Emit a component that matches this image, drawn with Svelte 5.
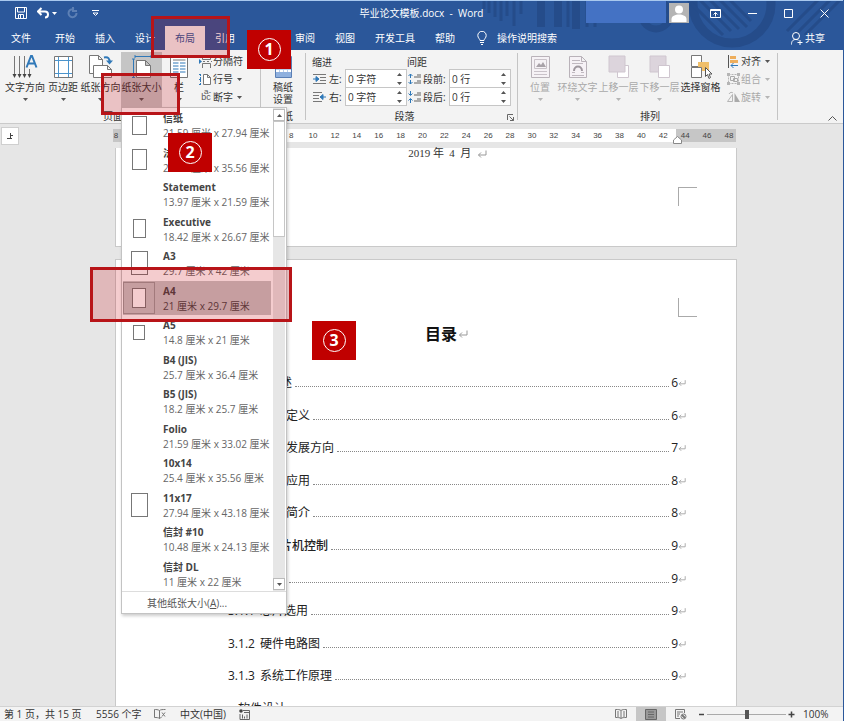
<script>
  const tabs = ['开始', '插入', '设计', '布局', '引用', '邮件', '审阅', '视图', '开发工具', '帮助'];
  const active = '布局';

  const pageTools = [
    { label: '文字方向', icon: 'textdir', w: 'w42' },
    { label: '页边距', icon: 'margins', w: 'w34' },
    { label: '纸张方向', icon: 'orient', w: 'w41' },
    { label: '纸张大小', icon: 'size', w: 'w41', on: true },
    { label: '栏', icon: 'columns', w: 'w34' }
  ];
  const pageSmall = [
    { label: '分隔符', icon: 'breaks' },
    { label: '行号', icon: 'lines' },
    { label: '断字', icon: 'hyphen' }
  ];
  const arrange = [
    { label: '位置', icon: 'position', w: 'w34', off: true },
    { label: '环绕文字', icon: 'wrap', w: 'w41', off: true },
    { label: '上移一层', icon: 'forward', w: 'w41', off: true },
    { label: '下移一层', icon: 'backward', w: 'w41', off: true },
    { label: '选择窗格', icon: 'pane', w: 'w41', flat: true }
  ];
  const arrangeSmall = [
    { label: '对齐', icon: 'align' },
    { label: '组合', icon: 'group', off: true },
    { label: '旋转', icon: 'rotate', off: true }
  ];
  const indent = [
    { id: 'left', label: '左:', icon: 'indl', value: '0 字符' },
    { id: 'right', label: '右:', icon: 'indr', value: '0 字符' }
  ];
  const spacing = [
    { id: 'before', label: '段前:', icon: 'spb', value: '0 行' },
    { id: 'after', label: '段后:', icon: 'spa', value: '0 行' }
  ];

  const sizes = [
    { name: '信纸', dim: '21.59 厘米 x 27.94 厘米', t: [15, 19] },
    { name: '法律', dim: '21.59 厘米 x 35.56 厘米', t: [15, 21] },
    { name: 'Statement', dim: '13.97 厘米 x 21.59 厘米' },
    { name: 'Executive', dim: '18.42 厘米 x 26.67 厘米', t: [13, 19] },
    { name: 'A3', dim: '29.7 厘米 x 42 厘米', t: [17, 24] },
    { name: 'A4', dim: '21 厘米 x 29.7 厘米', t: [14, 20], on: true },
    { name: 'A5', dim: '14.8 厘米 x 21 厘米', t: [12, 15] },
    { name: 'B4 (JIS)', dim: '25.7 厘米 x 36.4 厘米' },
    { name: 'B5 (JIS)', dim: '18.2 厘米 x 25.7 厘米' },
    { name: 'Folio', dim: '21.59 厘米 x 33.02 厘米' },
    { name: '10x14', dim: '25.4 厘米 x 35.56 厘米' },
    { name: '11x17', dim: '27.94 厘米 x 43.18 厘米', t: [17, 24] },
    { name: '信封 #10', dim: '10.48 厘米 x 24.13 厘米' },
    { name: '信封 DL', dim: '11 厘米 x 22 厘米' }
  ];

  const ticks = Array.from({ length: 29 }, (_, i) => Math.abs(i * 2 - 8) || '');

  const toc = [
    { l: 1, n: '第一章', t: '课题概述', p: 6 },
    { l: 2, n: '1.1', t: '单片机的定义', p: 6 },
    { l: 2, n: '1.2', t: '单片机的发展方向', p: 7 },
    { l: 2, n: '1.3', t: '单片机的应用', p: 8 },
    { l: 2, n: '1.4', t: '系统方案简介', p: 8 },
    { l: 1, n: '第二章', t: '基于单片机控制', p: 9, b: true },
    { l: 2, n: '3.1', t: '硬件设计', p: 9 },
    { l: 3, n: '3.1.1', t: '芯片选用', p: 9 },
    { l: 3, n: '3.1.2', t: '硬件电路图', p: 9 },
    { l: 3, n: '3.1.3', t: '系统工作原理', p: 9 },
    { l: 2, n: '', t: '软件设计', p: '' }
  ];
</script>

{#snippet ret()}
  <svg class="ret" width="10" height="8" viewBox="0 0 10 8"><path d="M9 .5V5H1.5M4 2.5 1.5 5 4 7.5" /></svg>
{/snippet}

{#snippet caret()}
  <svg class="caret" width="5" height="3" viewBox="0 0 5 3"><path d="M0 0h5L2.5 3z" /></svg>
{/snippet}

{#snippet icon(name)}
  {#if name === 'textdir'}
    <svg width="26" height="24" viewBox="0 0 26 24" fill="none">
      <path d="M2.5 1v19M7.5 1v19M12.5 1v19M17.5 14v6" stroke="#777" /><path d="M.5 19h4l-2 4zM5.500 19h4l-2 4zM10.500 19h4l-2 4zM15.500 19h4l-2 4z" fill="#444" />
      <path d="M14.500 12.500 19 1h1l4.500 11.500M16 8.500h7" stroke="#2f78b8" stroke-width="2" />
    </svg>
  {:else if name === 'margins'}
    <svg width="19" height="24" viewBox="0 0 19 24" fill="none">
      <path d="M.5 1.500h18v21H.5z" fill="#fff" stroke="#777" /><path d="M4.500 2v20M14.500 2v20M1 5.500h17M1 18.500h17" stroke="#4b94cc" />
    </svg>
  {:else if name === 'orient'}
    <svg width="24" height="24" viewBox="0 0 24 24" fill="none">
      <path d="M.5.5h9l4 4v14H.5zM9.500.5v4h4" fill="#fff" stroke="#777" /><path d="M4.500 10.500h14l4 4v8h-18zM18.500 10.500v4h4" fill="#fff" stroke="#777" />
      <path d="M15 2.500c4-1 6 1 5.500 5" stroke="#2f78b8" stroke-width="2" /><path d="M17 5.500h7L20.500 9.500z" fill="#2f78b8" />
    </svg>
  {:else if name === 'size'}
    <svg width="20" height="24" viewBox="0 0 20 24" fill="none">
      <path d="M3 1.500h16M3 0v3M19 0v3M1.500 4v19M0 4h3M0 22.500h3" stroke="#2f78b8" /><path d="M4.500 5.500h9l5 5v12h-14zM13.500 5.500v5h5" fill="#fff" stroke="#777" />
    </svg>
  {:else if name === 'columns'}
    <svg width="20" height="24" viewBox="0 0 20 24" fill="none">
      <path d="M1.500 1.500h17v21h-17z" fill="#fff" stroke="#777" /><path d="M4 8h5.500M4 11h5.500M4 14h5.500M4 17h5.500M11 8h5.500M11 11h5.500M11 14h5.500M11 17h5.500" stroke="#2f78b8" /><path d="M4 5h12.500" stroke="#777" />
    </svg>
  {:else if name === 'breaks'}
    <svg width="13" height="13" viewBox="0 0 13 13" fill="none"><path d="M3.500 0v4.500h8V0M3.500 13V8.500h8V13" stroke="#777" /><path d="M4 6.500h2M8 6.500h2M12 6.500h1" stroke="#777" /><path d="M0 4l3 2.500L0 9z" fill="#2f78b8" /></svg>
  {:else if name === 'lines'}
    <svg width="13" height="13" viewBox="0 0 13 13" fill="none"><path d="M1.500 1v11M0 1.500h2M0 6.500h2M0 11.500h2" stroke="#2f78b8" stroke-dasharray="2 1" /><path d="M4.500 1.500h4l3 3v7h-7zM8.500 1.500v3h3" fill="#fff" stroke="#777" /></svg>
  {:else if name === 'hyphen'}
    <span class="bc">b<sup>a-</sup><i>c</i></span>
  {:else if name === 'grid'}
    <svg width="17" height="24" viewBox="0 0 17 24" fill="none"><path d="M.5 1.500h16v21H.5z" fill="#fff" stroke="#5a7fb5" /><path d="M1 17h15v5H1z" fill="#8fb0de" /><path d="M1 8.500h15M1 11.500h15M1 14.500h15M4.500 2v15M8.500 2v15M12.500 2v15" stroke="#b9cdea" /></svg>
  {:else if name === 'indl'}
    <svg width="13" height="10" viewBox="0 0 13 10" fill="none"><path d="M0 .5h13M7 3.500h6M7 6.500h6M0 9.500h13" stroke="#777" /><path d="M0 5h3M3 2.500 6 5 3 7.500z" fill="#2f78b8" stroke="#2f78b8" /></svg>
  {:else if name === 'indr'}
    <svg width="13" height="10" viewBox="0 0 13 10" fill="none"><path d="M0 .5h9M0 3.500h6M0 6.500h6M0 9.500h9" stroke="#777" /><path d="M10 5h3M10 2.500 7 5l3 2.500z" fill="#2f78b8" stroke="#2f78b8" /></svg>
  {:else if name === 'spb' || name === 'spa'}
    <svg width="13" height="12" viewBox="0 0 13 12" fill="none">
      <path d="M6 3h3V1h4v4H6zM6 9h3V7h4v4H6z" fill="#aaa" />
      {#if name === 'spb'}<path d="M2.500 1v4M.5 3l2-2 2 2M2.500 7v4M.5 9l2 2 2-2" stroke="#2f78b8" />{:else}<path d="M2.500 0v4M.5 2.500l2 2 2-2M2.500 8v4M.5 9.500l2-2 2 2" stroke="#2f78b8" />{/if}
    </svg>
  {:else if name === 'position'}
    <svg width="19" height="24" viewBox="0 0 19 24" fill="none"><path d="M.5 1.500h18v21H.5z" fill="#f6f2f6" stroke="#b9b2b9" /><path d="M3.500 4.500h12v9h-12z" stroke="#c9c2c9" /><path d="M5 12l3-4 2 2 2-3 3 5z" fill="#a9a2a9" /><path d="M3 16.500h13M3 19.500h13" stroke="#c9c2c9" /></svg>
  {:else if name === 'wrap'}
    <svg width="18" height="24" viewBox="0 0 18 24" fill="none"><path d="M.5 1.500h12l5 5v16H.5zM12.500 1.500v5h5" fill="#f6f2f6" stroke="#b9b2b9" /><path d="M3 5.500h8M3 8.500h11M3 17.500h3M12 17.500h3M3 20.500h12" stroke="#c0b9c0" /><path d="M5 16c0-6 8-6 8 0" stroke="#9f989f" stroke-width="2" /></svg>
  {:else if name === 'forward'}
    <svg width="22" height="24" viewBox="0 0 22 24" fill="none"><path d="M9.500 10.500h11v12h-11z" fill="#fff" stroke="#cfc6cf" /><path d="M1 1h16v16H1z" fill="#dcd4dc" stroke="#cfc6cf" /></svg>
  {:else if name === 'backward'}
    <svg width="22" height="24" viewBox="0 0 22 24" fill="none"><path d="M1 1h16v16H1z" fill="#dcd4dc" stroke="#cfc6cf" /><path d="M9.500 10.500h11v12h-11z" fill="#fff" stroke="#cfc6cf" /></svg>
  {:else if name === 'pane'}
    <svg width="22" height="24" viewBox="0 0 22 24" fill="none"><path d="M1.500.5h10v11h-10z" fill="#fff" stroke="#777" /><path d="M8 7h11v9H8z" fill="#f0bf6a" /><path d="M1.500 12.500h10v10h-10z" fill="#fff" stroke="#777" /><path d="M15.500 12.500v9l2-2 1.500 4 1.500-1-1.500-3.500h3z" fill="#fff" stroke="#555" /></svg>
  {:else if name === 'align'}
    <svg width="12" height="13" viewBox="0 0 12 13" fill="none"><path d="M1.500 0v13" stroke="#555" /><path d="M3 1h6v3H3zM3 5h8v3H3z" fill="#eeae5c" /><path d="M11 10.500H4M6.500 8 4 10.500 6.500 13" stroke="#2f78b8" /></svg>
  {:else if name === 'group'}
    <svg width="13" height="12" viewBox="0 0 13 12" fill="none"><path d="M1.500 1.500h10v9h-10z" stroke="#b5b5b5" stroke-dasharray="2 1" /><path d="M3.500 3.500h4v4h-4zM6.500 5.500h4v3h-4z" stroke="#aaa" /><path d="M0 0h3v3H0zM10 0h3v3h-3zM0 9h3v3H0zM10 9h3v3h-3z" fill="#b5b5b5" /></svg>
  {:else if name === 'rotate'}
    <svg width="13" height="12" viewBox="0 0 13 12" fill="none"><path d="M.5 10.500h5v-7z" stroke="#b5b5b5" /><path d="M7.500 2v9H13z" fill="#aaa" /><path d="M2 3c1-2 3-2 4-1" stroke="#b5b5b5" /></svg>
  {/if}
{/snippet}

{#snippet big(t)}
  <button class="big {t.w}" class:on={t.on} class:off={t.off}>
    <span class="pic">{@render icon(t.icon)}</span>
    <span>{t.label}</span>
    {#if !t.flat}{@render caret()}{/if}
  </button>
{/snippet}

{#snippet small(t)}
  <button class="small" class:off={t.off}>
    <span class="spic">{@render icon(t.icon)}</span><span>{t.label}</span>{@render caret()}
  </button>
{/snippet}

{#snippet spin(title, list)}
  <div class="spincol">
    <div class="head">{title}</div>
    {#each list as f}
      <div class="field">
        <label for={f.id}>{@render icon(f.icon)}<span>{f.label}</span></label>
        <div class="box">
          <input id={f.id} type="text" value={f.value} />
          <svg width="5" height="12" viewBox="0 0 5 12"><path d="M0 3h5L2.500 0zM0 9h5l-2.500 3z" /></svg>
        </div>
      </div>
    {/each}
  </div>
{/snippet}

<div class="app">
  <header>
    <svg class="deco" width="370" height="49" viewBox="0 0 370 49" fill="none" stroke="#254c8a">
      <path d="M11 0v8M16 0v12M22 0v16M28 0v20M34 0v15M41 0v25M48 0v13" stroke-width="3" />
      <path d="M68 0v26M85 0v26M103 0v28" stroke-width="8" />
      <path d="M95 0v26M114 0v26M122 0v26M129 0v22" stroke-width="3" />
      <circle cx="183" cy="14" r="14" stroke-width="7" />
      <circle cx="259" cy="3" r="39" stroke-width="9" />
      <path d="M222-6l36 36M230-8l36 36M238-10l36 36M246-12l32 32M214-2l36 36M322 34l40-40M332 34l38-38M314 30l36-36" stroke-width="3" />
    </svg>
    <div class="title">
      <div class="quick">
        <button aria-label="保存"><svg width="12" height="12" viewBox="0 0 12 12" fill="none" stroke="#fff"><path d="M.5.5h11v11H.5z" /><path d="M2.500 1v4h7V1M3.500 11.500v-4h5v4" /><path d="M5.500 8v3" /></svg></button>
        <button aria-label="撤消" class="undo"><svg width="12" height="12" viewBox="0 0 12 12" fill="none" stroke="#fff" stroke-width="2"><path d="M1 4.500h7c4 0 4 6 0 6M4.500 1 1 4.500 4.500 8" /></svg><svg width="5" height="3" viewBox="0 0 5 3"><path d="M0 0h5L2.500 3z" fill="#fff" /></svg></button>
        <button aria-label="恢复"><svg width="11" height="12" viewBox="0 0 11 12" fill="none" stroke="#5d80b5" stroke-width="2"><path d="M7 2.500A4 4 0 1 0 9.500 6M6 0v4h4" /></svg></button>
        <button aria-label="自定义快速访问工具栏" class="cust"><svg width="7" height="7" viewBox="0 0 7 7" fill="none" stroke="#fff"><path d="M0 .5h7M1 3l2.500 2.500L6 3z" /></svg></button>
      </div>
      <div class="name">毕业论文模板.docx&nbsp; -&nbsp; Word</div>
      <div class="win">
        <span class="user"></span>
        <svg class="avatar" width="20" height="20" viewBox="0 0 20 20"><path d="M0 0h20v20H0z" fill="#b4b4b4" /><circle cx="10" cy="6.500" r="4" fill="#fff" /><path d="M2.500 19v-3c0-6 15-6 15 0v3z" fill="#fff" /></svg>
        <button aria-label="功能区显示选项"><svg width="11" height="9" viewBox="0 0 11 9" fill="none" stroke="#fff"><path d="M.5.5h10v8H.5zM1 1.500h9M5.500 7.500v-4M3.500 5.500l2-2 2 2" /></svg></button>
        <button aria-label="最小化"><svg width="9" height="9" viewBox="0 0 9 9" stroke="#fff"><path d="M0 4.500h9" /></svg></button>
        <button aria-label="最大化"><svg width="9" height="9" viewBox="0 0 9 9" fill="none" stroke="#fff"><path d="M.5.5h8v8h-8z" /></svg></button>
        <button aria-label="关闭"><svg width="9" height="9" viewBox="0 0 9 9" stroke="#fff"><path d="M.5.5l8 8M8.500.5l-8 8" /></svg></button>
      </div>
    </div>
    <nav>
      <button class="file">文件</button>
      {#each tabs as t}
        <button class:sel={t === active} class:wide={t.length > 2}>{t}</button>
      {/each}
      <button class="tell"><svg width="10" height="14" viewBox="0 0 10 14" fill="none" stroke="#fff"><path d="M3 9.500C3 8 .8 7 .8 4.500a4.200 4.200 0 0 1 8.400 0C9.200 7 7 8 7 9.500zM3 11.500h4M4 13.500h2" /></svg>操作说明搜索</button>
      <button class="share"><svg width="12" height="13" viewBox="0 0 12 13" fill="none" stroke="#fff"><circle cx="5" cy="4" r="3.500" /><path d="M.5 12.500c0-3 1-5 4.500-5 1 0 2 .3 2.500.7M9 8v5M6.500 10.500h5" /></svg>共享</button>
    </nav>
  </header>

  <section class="ribbon">
    <div class="group g1">
      <div class="body">
        {#each pageTools as t}{@render big(t)}{/each}
        <div class="smalls">{#each pageSmall as t}{@render small(t)}{/each}</div>
      </div>
      <div class="cap launch">页面设置</div>
    </div>
    <div class="group g2">
      <div class="body center">
        <button class="big w42"><span class="pic">{@render icon('grid')}</span><span class="two">稿纸<br />设置</span></button>
      </div>
      <div class="cap">稿纸</div>
    </div>
    <div class="group g3">
      <div class="body spins">
        {@render spin('缩进', indent)}
        {@render spin('间距', spacing)}
      </div>
      <div class="cap withbtn">段落<button aria-label="段落设置"><svg width="7" height="7" viewBox="0 0 7 7" fill="none" stroke="#666"><path d="M.5 6V.5H6M2.500 2.500l4 4M6.500 3v3.500H3" /></svg></button></div>
    </div>
    <div class="group g4">
      <div class="body">
        {#each arrange as t}{@render big(t)}{/each}
        <div class="smalls">{#each arrangeSmall as t}{@render small(t)}{/each}</div>
      </div>
      <div class="cap">排列</div>
    </div>
    <button class="fold" aria-label="折叠功能区"><svg width="9" height="5" viewBox="0 0 9 5" fill="none" stroke="#555"><path d="M.5 4.500l4-4 4 4" /></svg></button>
  </section>

  <main>
    <div class="rulerrow">
      <button class="tabsel" aria-label="制表符"><svg width="7" height="6" viewBox="0 0 7 6" fill="none" stroke="#444"><path d="M3.500 0v5.500M3.500 2.500H6M0 5.500h5" /></svg></button>
      <div class="ruler">
        {#each ticks as t}<span>{t}</span>{/each}
        <svg class="mark" width="9" height="8" viewBox="0 0 9 8"><path d="M.5 7.500V4l4-3.500 4 3.500v3.500z" fill="#fff" stroke="#888" /></svg>
      </div>
    </div>
    <article class="page one">
      <p>2019 年&nbsp; 4 &nbsp;月&nbsp; {@render ret()}</p>
      <i class="corner top"></i>
    </article>
    <article class="page second">
      <i class="corner bottom"></i>
      <h1>目录{@render ret()}</h1>
      <div class="toc">
        {#each toc as r}
          <a href="#toc" class="l{r.l}" class:bold={r.b}><span class="no">{r.n}</span><span>{r.t}</span><i></i><span class="pg">{r.p}</span>{@render ret()}</a>
        {/each}
      </div>
    </article>
  </main>

  <footer>
    <span class="s1">第 1 页，共 15 页</span>
    <span class="s2">5556 个字</span>
    <svg class="s3" width="12" height="10" viewBox="0 0 12 10" fill="none" stroke="#777"><path d="M5.500 1.500v8M5.500 1.500C4 .5 2 .5.5.5v8c2 0 4 0 5 1 .5-.5 1-.8 2-1M5.500 1.500C6.500.5 9 .5 11.500.5M8 3.500l3 4M11 3.500l-3 4" /></svg>
    <span class="s4">中文(中国)</span>
    <svg width="11" height="11" viewBox="0 0 11 11" fill="none" stroke="#666"><path d="M4 1.500h6.500v9H1V5M3.500 5.500v4M5.500 7.500v2M8 5.500v4M5 3.500h5" /><circle cx="2" cy="2" r="1.800" fill="#444" stroke="none" /></svg>
    <div class="views">
      <button aria-label="阅读视图"><svg width="12" height="10" viewBox="0 0 12 10" fill="none" stroke="#777"><path d="M6 1.500v8M6 1.500C5 .5 3 .5.5.5v8c2.500 0 4.500 0 5.500 1 1-1 3-1 5.500-1v-8C9 .5 7 .5 6 1.500M2 3h2M2 5h2M2 7h2M8 3h2M8 5h2M8 7h2" /></svg></button>
      <button aria-label="页面视图" class="on"><svg width="12" height="11" viewBox="0 0 12 11" fill="#999" stroke="#666"><path d="M.5.5h11v10H.5zM3 3h6M3 5.500h6M3 8h6" /></svg></button>
      <button aria-label="Web 版式视图"><svg width="12" height="11" viewBox="0 0 12 11" fill="none" stroke="#777"><path d="M5 9.500H.5v-9h9V4M2 3h6M2 5h3M2 7h2" /><circle cx="8.500" cy="7.500" r="2.500" /><path d="M7 6l3 3" stroke-width="2" /></svg></button>
    </div>
    <button class="zm" aria-label="缩小"><svg width="7" height="7" viewBox="0 0 7 7" stroke="#444" stroke-width="1.500"><path d="M1 3.500h5" /></svg></button>
    <input type="range" min="0" max="200" value="100" aria-label="缩放" />
    <button class="zm" aria-label="放大"><svg width="7" height="7" viewBox="0 0 7 7" stroke="#444" stroke-width="1.500"><path d="M.5 3.500h6M3.500.5v6" /></svg></button>
    <span class="pct">100%</span>
  </footer>

  <div class="menu">
    <div class="scroll">
      <div class="list">
        {#each sizes as s}
          <button class:on={s.on}>
            <span class="thumb">{#if s.t}<i style="width:{s.t[0]}px;height:{s.t[1]}px"></i>{/if}</span>
            <span class="txt"><b>{s.name}</b><span>{s.dim}</span></span>
          </button>
        {/each}
      </div>
      <div class="bar">
        <button aria-label="向上滚动"><svg width="5" height="3" viewBox="0 0 5 3"><path d="M0 3h5L2.500 0z" fill="#555" /></svg></button>
        <div class="grip"></div>
        <button aria-label="向下滚动"><svg width="5" height="3" viewBox="0 0 5 3"><path d="M0 0h5L2.500 3z" fill="#555" /></svg></button>
      </div>
    </div>
    <button class="more">其他纸张大小(<u>A</u>)...</button>
  </div>

  <div class="hl h1"></div>
  <div class="hl h2"></div>
  <div class="hl h3"></div>
  <div class="step p1"><span>1</span></div>
  <div class="step p2"><span>2</span></div>
  <div class="step p3"><span>3</span></div>
</div>

<style>
  :global(body) { margin: 0; }
  .app, .app * { box-sizing: border-box; }
  .app {
    position: relative; display: flex; flex-direction: column; height: 100vh; overflow: hidden;
    border-right: 1px solid #2b579a; background: #e6e6e6; color: #333;
    font: 10px/14px "Open Sans", "Noto Sans CJK SC", sans-serif;
  }
  button { border: 0; padding: 0; margin: 0; background: none; color: inherit; font: inherit; white-space: nowrap; }
  svg { display: block; flex: none; }

  header { position: relative; background: #2b579a; color: #fff; border-top: 1px solid #a8c8ee; }
  .deco { position: absolute; right: 0; top: 0; }
  .title { position: relative; display: grid; grid-template-columns: 1fr auto 1fr; align-items: center; height: 24px; }
  .quick { display: flex; align-items: center; padding-left: 15px; gap: 10px; }
  .undo { display: flex; align-items: center; gap: 3px; }
  .cust { margin-left: 4px; }
  .win { display: flex; align-items: center; justify-content: flex-end; gap: 27px; padding-right: 14px; align-self: stretch; }
  .user { width: 80px; align-self: stretch; margin-bottom: 2px; margin-right: -24px; background: #4472c4; }
  .avatar { margin-right: -6px; }
  nav { position: relative; display: flex; height: 25px; }
  nav button { width: 40px; height: 24px; margin-top: 1px; }
  nav .file { width: 42px; margin-right: 3px; }
  nav .wide { width: 60px; }
  nav .sel { background: #f3f3f3; color: #2b579a; }
  nav .tell { display: flex; align-items: center; width: auto; gap: 10px; margin-left: 12px; }
  nav .share { display: flex; align-items: center; width: auto; gap: 2px; margin-left: auto; margin-right: 18px; }

  .ribbon { display: flex; height: 74px; background: #f3f3f3; border-bottom: 1px solid #cacaca; flex: none; }
  .group { position: relative; display: flex; flex-direction: column; border-right: 1px solid #f3f3f3; }
  .group::after { content: ""; position: absolute; right: -1px; top: 3px; bottom: 3px; width: 1px; background: #c4c4c4; }
  .g1 { width: 261px; padding-left: 4px; }
  .g2 { width: 45px; }
  .g3 { width: 212px; }
  .g4 { width: 260px; padding-left: 5px; }
  .body { display: flex; height: 59px; }
  .center { justify-content: center; }
  .cap { text-align: center; line-height: 14px; }
  .launch { padding-right: 18px; }
  .withbtn { position: relative; padding-right: 14px; }
  .withbtn button { position: absolute; right: 3px; top: 5px; }
  .big { display: flex; flex-direction: column; align-items: center; height: 55px; margin-top: 2px; padding-top: 3px; }
  .big.on { background: #c5c5c5; }
  .big .caret { margin-top: 4px; }
  .pic { height: 25px; }
  .two { line-height: 12px; padding-top: 1px; }
  .w34 { width: 34px; }
  .w41 { width: 41px; }
  .w42 { width: 42px; }
  .caret { fill: #555; }
  .off { color: #a9a9a9; }
  .off .caret { fill: #b5b5b5; }
  .smalls { display: flex; flex-direction: column; padding: 2px 0 0 3px; }
  .g4 .smalls { padding-left: 6px; }
  .small { display: flex; align-items: center; height: 18px; }
  .small .caret { margin-left: 4px; }
  .spic { width: 14px; }
  .bc { display: block; position: relative; font: 9px/12px "Liberation Sans", sans-serif; color: #555; }
  .bc i { font-style: normal; }
  .bc sup { position: absolute; left: 5px; top: -3px; font-size: 8px; line-height: 8px; }
  .spins { padding-left: 6px; }
  .spincol { padding-top: 4px; }
  .head { line-height: 16px; }
  .field { display: flex; height: 18px; justify-content: space-between; }
  .field label { display: flex; align-items: center; gap: 3px; width: 33px; padding-left: 1px; }
  .spincol + .spincol label { width: 42px; gap: 2px; }
  .box { display: flex; align-items: center; width: 62px; padding: 0 4px 0 2px; border: 1px solid #c6c6c6; background: #fff; margin-top: -1px; height: 19px; }
  .box input { flex: 1; min-width: 0; border: 0; padding: 0; background: none; font: inherit; color: inherit; outline: 0; }
  .box svg { fill: #555; }
  .fold { margin: auto 6px 2px auto; }

  main { position: relative; flex: 1; min-height: 0; overflow: hidden; }
  .rulerrow { display: flex; height: 24px; padding-top: 3px; }
  .tabsel { width: 18px; height: 18px; margin-left: 1px; background: #fff; border: 1px solid #cfcfcf; display: flex; align-items: center; justify-content: center; }
  .ruler {
    position: relative; flex: 1; display: flex; justify-content: space-between; height: 13px; margin: 2px 107px 0 94px; padding: 0 7px 0 3px;
    font: 8px/13px "Liberation Sans", sans-serif; color: #444;
    background: linear-gradient(90deg, #c6c6c6 90px, transparent 90px), linear-gradient(270deg, #c6c6c6 60px, #fff 60px);
  }
  .ruler span { width: 0; display: flex; justify-content: center; }
  .mark { position: absolute; right: 54px; top: 7px; }
  .page { position: relative; margin: 0 106px 0 115px; background: #fff; border: 1px solid #c9c9c9; }
  .one { height: 99px; border-top: 0; }
  .one p { display: flex; align-items: center; justify-content: center; margin: 0 0 0 43px; font: 11px/11px "Liberation Serif", "Noto Sans CJK SC", serif; white-space: pre; }
  .second { margin-top: 12px; height: 500px; }
  .corner { position: absolute; right: 39px; width: 19px; height: 19px; border-left: 1px solid #aaa; }
  .top { top: 39px; border-top: 1px solid #aaa; }
  .bottom { top: 38px; border-bottom: 1px solid #aaa; }
  .ret { fill: none; stroke: #999; }
  h1 { display: flex; align-items: center; justify-content: center; gap: 1px; margin: 62px 0 0 44px; font-size: 16px; line-height: 24px; color: #111; padding-right: 3px; }
  .toc { display: grid; grid-auto-rows: 1fr; height: 358px; margin-top: 21px; padding: 0 50px 0 87px; font-size: 12px; color: #222; }
  .toc a { display: flex; align-items: center; color: inherit; text-decoration: none; }
  .toc .no { margin-right: 5px; }
  .l2 .no { width: 17px; }
  .l3 .no { width: 27px; }
  .toc .l2 { padding-left: 13px; }
  .toc .l3 { padding-left: 25px; }
  .toc .bold { font-weight: 500; }
  .toc i { flex: 1; height: 8px; margin: 0 2px 0 3px; border-bottom: 1px dotted #888; }
  .toc .ret { width: 8px; }

  footer { position: relative; display: flex; align-items: center; height: 15px; flex: none; background: #f3f3f3; border-top: 1px solid #d2d2d2; padding-left: 4px; }
  .s1 { width: 92px; }
  .s2 { width: 58px; }
  .s3 { margin-right: 14px; }
  .s4 { width: 59px; }
  footer span { white-space: nowrap; }
  .views { display: flex; margin-left: auto; height: 14px; }
  .views button { width: 30px; display: flex; align-items: center; justify-content: center; }
  .views .on { background: #c6c6c6; }
  .zm { width: 7px; margin-left: 2px; }
  footer input { appearance: none; width: 79px; height: 11px; margin: 0 0 0 2px; background: linear-gradient(#aaa, #aaa) center / 100% 1px no-repeat; }
  footer input::-webkit-slider-thumb { appearance: none; width: 4px; height: 9px; background: #555; }
  .pct { width: 48px; padding-left: 8px; }

  .menu { position: absolute; left: 121px; top: 107px; width: 166px; background: #fff; border: 1px solid #c3c3c3; box-shadow: 1px 2px 3px rgba(0, 0, 0, .2); }
  .scroll { display: flex; height: 484px; border-bottom: 1px solid #ddd; padding-right: 1px; }
  .list { flex: 1; display: grid; grid-auto-rows: 1fr; padding: 0 1px; margin-right: 1px; }
  .list button { display: flex; align-items: center; text-align: left; color: #666; }
  .list .on { background: #c6c6c6; color: #444; }
  .thumb { display: flex; align-items: center; justify-content: center; width: 32px; height: 32px; margin-right: 8px; border: 1px solid transparent; }
  .on .thumb { border-color: #999; }
  .thumb i { border: 1px solid #777; background: #fff; }
  .txt { display: flex; flex-direction: column; line-height: 15px; padding-top: 2px; }
  .txt b { color: #444; }
  .bar { display: flex; flex-direction: column; width: 12px; background: #e6e6e6; padding: 1px 0; }
  .bar button { display: flex; align-items: center; justify-content: center; height: 12px; border: 1px solid #bbb; background: #fff; }
  .grip { height: 116px; margin-bottom: auto; background: #fff; border: 1px solid #c6c6c6; }
  .more { display: block; width: 100%; height: 21px; padding-left: 25px; text-align: left; color: #555; }

  .hl { position: absolute; border: 3px solid #b81418; background: rgba(200, 0, 10, .2); }
  .h1 { left: 151px; top: 16px; width: 79px; height: 42px; }
  .h2 { left: 101px; top: 73px; width: 79px; height: 42px; }
  .h3 { left: 90px; top: 267px; width: 202px; height: 55px; }
  .step { position: absolute; display: flex; align-items: center; justify-content: center; width: 44px; height: 39px; background: #c00000; color: #fff; }
  .step span { width: 23px; height: 23px; border: 1px solid #fff; border-radius: 50%; text-align: center; font-size: 16px; line-height: 21px; font-weight: 700; }
  .p1 { left: 247px; top: 30px; }
  .p2 { left: 168px; top: 133px; }
  .p3 { left: 312px; top: 321px; }
</style>
